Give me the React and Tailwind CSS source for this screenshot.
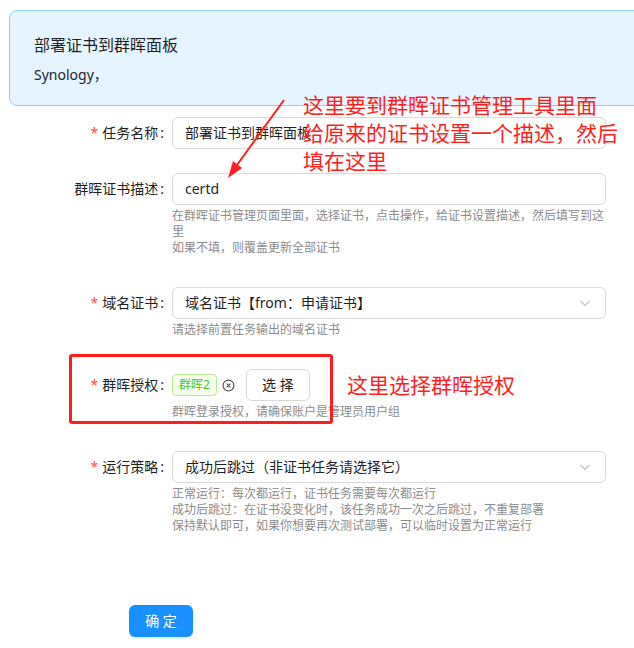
import { CircleX } from "lucide-react";

function Label({ text, required }) {
  return (
    <div className="flex h-8 w-[172px] shrink-0 items-center justify-end text-sm text-[#1f1f1f]">
      {required && <span className="mr-1 text-[#ff4d4f]">*</span>}
      <span>{text}</span>
      <span className="ml-[2px] mr-[8px]">:</span>
    </div>
  );
}

function Chevron() {
  return (
    <svg width="12" height="12" viewBox="0 0 12 12" className="text-[#bfbfbf]">
      <path d="M1.5 4 L6 8.5 L10.5 4" fill="none" stroke="currentColor" strokeWidth="1.1" />
    </svg>
  );
}

function Select({ value }) {
  return (
    <div className="flex h-8 w-[434px] items-center justify-between rounded-md border border-[#d9d9d9] bg-white pl-[12px] pr-[14px] text-sm text-[#1f1f1f]">
      <span>{value}</span>
      <Chevron />
    </div>
  );
}

function Help({ children, className }) {
  return (
    <div className={"w-[434px] text-xs leading-4 text-[#8c8c8c] " + (className || "")}>{children}</div>
  );
}

export default function App() {
  return (
    <div
      className="relative h-[648px] w-[634px] overflow-hidden bg-white"
      style={{ fontFamily: "'Noto Sans', 'Noto Sans CJK SC', sans-serif" }}
    >
      {/* banner */}
      <div className="ml-[9px] mt-[10px] h-[96px] w-[640px] rounded-lg border border-[#91caff] bg-[#e6f4ff] pl-[24px] pt-[22px]">
        <div className="text-base leading-6 text-[#1f1f1f]">部署证书到群晖面板</div>
        <div className="mt-[7px] text-sm leading-[22px] text-[#1f1f1f]">Synology，</div>
      </div>

      {/* form */}
      <div className="mt-[11px]">
        <div className="flex">
          <Label text="任务名称" required />
          <div className="flex h-8 w-[434px] items-center rounded-md border border-[#d9d9d9] px-[12px] text-sm text-[#1f1f1f]">
            部署证书到群晖面板
          </div>
        </div>

        <div className="mt-[24px] flex">
          <Label text="群晖证书描述" />
          <div>
            <div className="flex h-8 w-[434px] items-center rounded-md border border-[#d9d9d9] px-[12px] text-sm text-[#1f1f1f]">
              certd
            </div>
            <Help className="mt-[3px]">
              在群晖证书管理页面里面，选择证书，点击操作，给证书设置描述，然后填写到这里
              <br />
              如果不填，则覆盖更新全部证书
            </Help>
          </div>
        </div>

        <div className="mt-[31px] flex">
          <Label text="域名证书" required />
          <div>
            <Select value="域名证书【from：申请证书】" />
            <Help className="mt-[3px]">请选择前置任务输出的域名证书</Help>
          </div>
        </div>

        <div className="mt-[31px] flex">
          <Label text="群晖授权" required />
          <div>
            <div className="flex h-8 items-center">
              <span className="flex h-[22px] items-center rounded border border-[#b7eb8f] bg-[#f6ffed] px-[6px] text-xs text-[#52c41a]">
                群晖2
              </span>
              <CircleX size={13} strokeWidth={2} className="ml-[5px] text-[#4a4a4a]" />
              <button className="ml-[11px] h-8 w-[64px] rounded-md border border-[#d9d9d9] bg-white text-sm text-[#1f1f1f]">
                选 择
              </button>
            </div>
            <Help className="mt-[3px]">群晖登录授权，请确保账户是管理员用户组</Help>
          </div>
        </div>

        <div className="mt-[31px] flex">
          <Label text="运行策略" required />
          <div>
            <Select value="成功后跳过（非证书任务请选择它）" />
            <Help className="mt-[3px]">
              正常运行：每次都运行，证书任务需要每次都运行
              <br />
              成功后跳过：在证书没变化时，该任务成功一次之后跳过，不重复部署
              <br />
              保持默认即可，如果你想要再次测试部署，可以临时设置为正常运行
            </Help>
          </div>
        </div>

        <button className="ml-[129px] mt-[71px] h-8 w-[64px] rounded-md bg-[#1890ff] text-sm text-white shadow-[0_2px_0_rgba(5,145,255,0.1)]">
          确 定
        </button>
      </div>

      {/* annotations */}
      <svg className="pointer-events-none absolute left-0 top-0" width="634" height="648">
        <line x1="284" y1="100" x2="237" y2="165" stroke="#ff2020" strokeWidth="2" />
        <polygon points="228,178 242,168 233,161" fill="#ff2020" />
      </svg>
      <div className="pointer-events-none absolute left-[303px] top-[91px] text-[21px] leading-[28px] text-[#ff1e1e]">
        这里要到群晖证书管理工具里面
        <br />
        给原来的证书设置一个描述，然后
        <br />
        填在这里
      </div>
      <div className="pointer-events-none absolute left-[69px] top-[354px] h-[70px] w-[264px] rounded-[3px] border-[3px] border-[#ff1e1e]" />
      <div className="pointer-events-none absolute left-[347px] top-[371px] text-[21px] leading-[28px] text-[#ff1e1e]">
        这里选择群晖授权
      </div>
    </div>
  );
}
